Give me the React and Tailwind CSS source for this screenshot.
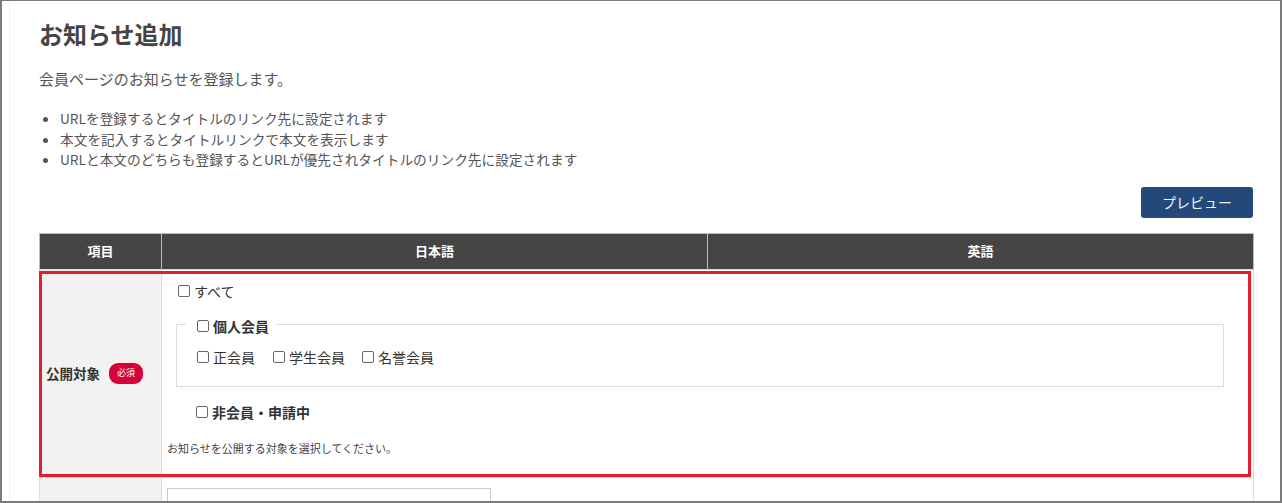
import React from 'react';

const font = { fontFamily: '"Noto Sans CJK JP", "Noto Sans", sans-serif' };

const Box = () => (
  <span className="inline-block w-[12px] h-[12px] border border-[#666] rounded-[2px] bg-white mr-[4px] align-[-1px]" />
);

const Check = ({ label, bold = false, className = '' }) => (
  <label className={`inline-flex items-center text-[14px] leading-[20px] text-[#333] ${bold ? 'font-bold' : ''} ${className}`}>
    <Box />
    {label}
  </label>
);

export default function App() {
  return (
    <div className="w-[1282px] h-[503px] bg-white overflow-hidden" style={font}>
      <div className="w-full h-full border-[#7b7b7b] border-l-2 border-r-2 border-t border-b-2 overflow-hidden">
        <div className="h-full ml-[7px] border-l border-[#efefef] pl-[29px]">
          <div className="w-[1214px]">
            {/* Title */}
            <h1 className="pt-[17px] text-[24px] leading-[32px] font-bold text-[#444]">お知らせ追加</h1>

            <p className="mt-[19px] text-[15px] leading-[20px] text-[#555]">会員ページのお知らせを登録します。</p>

            <ul className="mt-[19px] list-disc pl-[21px] text-[13.7px] leading-[20.5px] text-[#555]">
              <li>URLを登録するとタイトルのリンク先に設定されます</li>
              <li>本文を記入するとタイトルリンクで本文を表示します</li>
              <li>URLと本文のどちらも登録するとURLが優先されタイトルのリンク先に設定されます</li>
            </ul>

            <div className="flex justify-end mt-[17px]">
              <button className="w-[112px] h-[31px] bg-[#23487a] text-[#eef2f7] text-[14px] rounded-[3px]">プレビュー</button>
            </div>

            {/* Table */}
            <div className="relative mt-[15px]">
              <table className="w-[1214px] border-collapse table-fixed">
                <colgroup>
                  <col className="w-[122px]" />
                  <col className="w-[546px]" />
                  <col className="w-[546px]" />
                </colgroup>
                <thead>
                  <tr className="h-[36px] bg-[#454545] text-white text-[13px] font-bold">
                    <th className="border border-[#bbb] border-b-0 font-bold">項目</th>
                    <th className="border border-[#bbb] border-b-0 font-bold">日本語</th>
                    <th className="border border-[#bbb] border-b-0 font-bold">英語</th>
                  </tr>
                </thead>
                <tbody>
                  <tr>
                    <td className="h-[208px] bg-[#f2f2f2] border border-[#ddd] pl-[6px] align-middle">
                      <div className="flex items-center">
                        <span className="text-[13.5px] font-bold text-[#333]">公開対象</span>
                        <span className="ml-[9px] w-[34px] h-[21px] rounded-[9px] bg-[#d6003a] text-white text-[9px] flex items-center justify-center">必須</span>
                      </div>
                    </td>
                    <td colSpan={2} className="border border-[#ddd] px-[5px] align-top">
                      <div className="pt-[8px] pl-[11px]">
                        <Check label="すべて" />
                      </div>
                      <fieldset className="mt-[11px] ml-[9px] mr-[24px] border border-[#ddd] pl-[9px] pb-[19px] min-w-0">
                        <legend className="pl-[11px] pr-[8px]">
                          <Check label="個人会員" bold />
                        </legend>
                        <div className="pl-[11px] pt-[10px] flex">
                          <Check label="正会員" className="mr-[18px]" />
                          <Check label="学生会員" className="mr-[17px]" />
                          <Check label="名誉会員" />
                        </div>
                      </fieldset>
                      <div className="pl-[29px] mt-[12px]">
                        <Check label="非会員・申請中" bold />
                      </div>
                      <p className="mt-[17px] text-[11px] leading-[16px] text-[#444]">お知らせを公開する対象を選択してください。</p>
                    </td>
                  </tr>
                  <tr>
                    <td className="h-[40px] bg-[#f2f2f2] border border-[#ddd]"></td>
                    <td colSpan={2} className="border border-[#ddd] px-[5px] pt-[10px] align-top">
                      <div className="w-[324px] h-[30px] border border-[#ccc] bg-white" />
                    </td>
                  </tr>
                </tbody>
              </table>
              {/* highlight */}
              <div className="absolute left-0 top-[38px] w-[1212px] h-[206px] border-[3px] border-[#e41e2d] pointer-events-none" />
            </div>
          </div>
        </div>
      </div>
    </div>
  );
}
